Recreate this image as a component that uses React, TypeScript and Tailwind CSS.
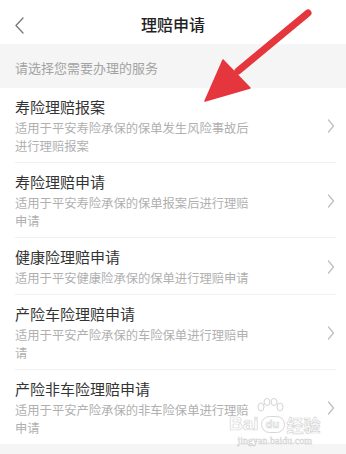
import React from "react";

const items = [
  { title: "寿险理赔报案", desc: "适用于平安寿险承保的保单发生风险事故后进行理赔报案" },
  { title: "寿险理赔申请", desc: "适用于平安寿险承保的保单报案后进行理赔申请" },
  { title: "健康险理赔申请", desc: "适用于平安健康险承保的保单进行理赔申请" },
  { title: "产险车险理赔申请", desc: "适用于平安产险承保的车险保单进行理赔申请" },
  { title: "产险非车险理赔申请", desc: "适用于平安产险承保的非车险保单进行理赔申请" },
];

function Chevron() {
  return (
    <svg width="8" height="14" viewBox="0 0 8 14" fill="none">
      <path d="M1.5 1 L6.5 7 L1.5 13" stroke="#bdbdbd" strokeWidth="1.2" strokeLinecap="round" strokeLinejoin="round" />
    </svg>
  );
}

export default function App() {
  return (
    <div
      className="relative w-[346px] h-[454px] overflow-hidden bg-[#f5f5f5]"
      style={{ fontFamily: '"Noto Sans CJK SC", "Noto Sans", sans-serif' }}
    >
      {/* Header */}
      <div className="relative h-[44px] bg-white flex items-center justify-center">
        <div className="absolute left-[14px] top-[17px]">
          <svg width="11" height="17" viewBox="0 0 11 17" fill="none">
            <path d="M9 1 L2 8.5 L9 16" stroke="#777" strokeWidth="1.3" strokeLinecap="round" strokeLinejoin="round" />
          </svg>
        </div>
        <div className="text-[16px] font-medium text-[#222] pt-[3px] leading-none">理赔申请</div>
      </div>

      {/* Section hint */}
      <div className="h-[44px] flex items-center pl-[15px] pt-[3px] text-[13px] text-[#a3a3a3]">
        请选择您需要办理的服务
      </div>

      {/* List */}
      <div className="bg-white">
        {items.map((it, i) => (
          <div key={i} className="relative">
            {i > 0 && <div className="ml-[15px] mr-[10px] h-px bg-[#f0f0f0]" />}
            <div className="flex items-center pl-[15px] pr-[11px] pt-[8px] pb-[7px]">
              <div className="flex-1">
                <div className="text-[15px] leading-[22px] text-[#333]">{it.title}</div>
                <div className="w-[242px] text-[12.3px] leading-[18px] text-[#b0b0b0] mt-[1px]">{it.desc}</div>
              </div>
              <Chevron />
            </div>
          </div>
        ))}
      </div>

      {/* Watermark */}
      <svg className="absolute left-[255px] top-[398px] pointer-events-none" width="30" height="20" viewBox="0 0 30 20" fill="none" stroke="#d4d4d4" strokeWidth="1">
        <ellipse cx="6" cy="9" rx="3" ry="4" />
        <ellipse cx="12" cy="4" rx="3" ry="3.5" />
        <ellipse cx="19" cy="4" rx="3" ry="3.5" />
        <ellipse cx="25" cy="9" rx="3" ry="4" />
      </svg>
      <div className="absolute left-[229px] top-[414px] flex flex-col items-center pointer-events-none">
        <div className="flex items-end gap-[2px] text-[19px] font-bold leading-none text-white" style={{ WebkitTextStroke: "0.7px #d6d6d6", fontFamily: '"Liberation Sans", sans-serif' }}>
          <span>Bai</span>
          <span className="relative inline-flex items-center justify-center w-[24px] h-[17px] rounded-full border border-[#d6d6d6] text-[11px]">du</span>
          <span className="text-[17px]" style={{ fontFamily: '"Noto Sans CJK SC", sans-serif' }}>经验</span>
        </div>
        <div className="mt-[3px] text-[10px] text-white leading-none" style={{ WebkitTextStroke: "0.5px #d0d0d0", fontFamily: '"Liberation Serif", serif' }}>
          jingyan.baidu.com
        </div>
      </div>

      {/* Red arrow overlay */}
      <svg className="absolute left-0 top-0 pointer-events-none" width="346" height="454" viewBox="0 0 346 454">
        <line x1="308" y1="13" x2="238" y2="71" stroke="#e5353d" strokeWidth="7" strokeLinecap="round" />
        <polygon points="205,101 223,60 250,88" fill="#e5353d" stroke="#e5353d" strokeWidth="1.5" strokeLinejoin="round" />
      </svg>
    </div>
  );
}
